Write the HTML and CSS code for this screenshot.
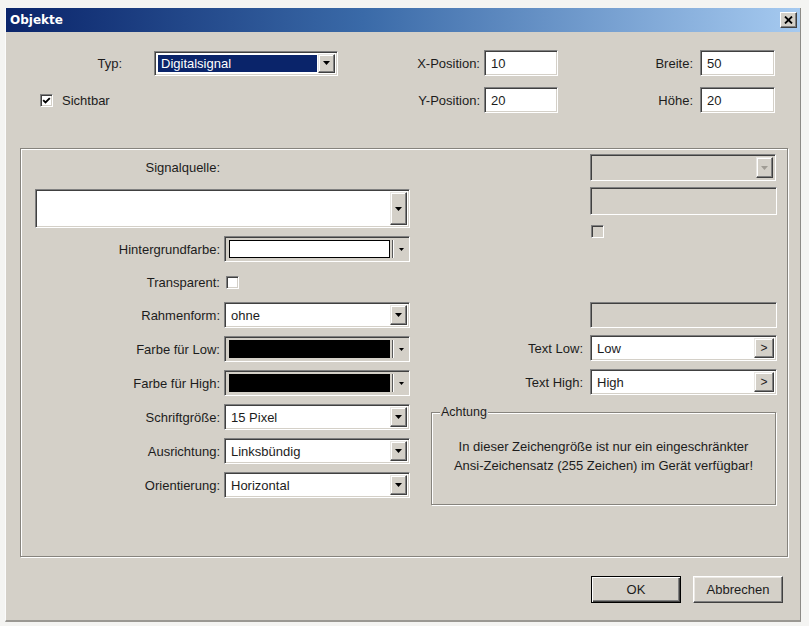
FILE: index.html
```html
<!DOCTYPE html>
<html lang="de">
<head>
<meta charset="utf-8">
<title>Objekte</title>
<link rel="stylesheet" href="styles.css">
</head>
<body>
<div class="dialog">
  <div class="titlebar">
    <span class="title">Objekte</span>
    <span class="close"><svg width="9" height="8" viewBox="0 0 9 8"><path d="M1 0.5L8 7.5M8 0.5L1 7.5" stroke="#000" stroke-width="1.8"/></svg></span>
  </div>

  <div class="top">
    <span class="lbl">Typ:</span>
    <div class="sunken combo typ">
      <div class="sel">Digitalsignal</div>
      <span class="raised ddbtn"><svg width="7" height="4" viewBox="0 0 7 4"><path d="M0 0h7L3.5 4z" fill="#000"/></svg></span>
    </div>
    <span class="lbl pr4">X-Position:</span>
    <div class="sunken field">10</div>
    <span class="lbl pr7">Breite:</span>
    <div class="sunken field">50</div>

    <label class="check-row">
      <span class="sunken cb"><svg width="9" height="9" viewBox="0 0 9 9"><polyline points="1.2,4.2 3.5,6.5 7.8,2.2" fill="none" stroke="#000" stroke-width="1.9"/></svg></span>
      Sichtbar
    </label>
    <span class="lbl pr4">Y-Position:</span>
    <div class="sunken field">20</div>
    <span class="lbl pr7">Höhe:</span>
    <div class="sunken field">20</div>
  </div>

  <div class="panel">
    <div class="col-left">
      <div class="src-label"><span class="lbl">Signalquelle:</span></div>
      <div class="sunken combo big">
        <div class="val"></div>
        <span class="raised ddbtn"><svg width="7" height="4" viewBox="0 0 7 4"><path d="M0 0h7L3.5 4z" fill="#000"/></svg></span>
      </div>

      <div class="row r-first">
        <span class="lbl">Hintergrundfarbe:</span>
        <div class="sunken colorcombo">
          <span class="swatch white"></span>
          <span class="sep"></span>
          <span class="cbtn"><svg width="5" height="3" viewBox="0 0 5 3"><path d="M0 0h5L2.5 3z" fill="#000"/></svg></span>
        </div>
      </div>

      <div class="row r-check">
        <span class="lbl">Transparent:</span>
        <span class="sunken cb"></span>
      </div>

      <div class="row r-tight">
        <span class="lbl">Rahmenform:</span>
        <div class="sunken combo">
          <div class="val">ohne</div>
          <span class="raised ddbtn"><svg width="7" height="4" viewBox="0 0 7 4"><path d="M0 0h7L3.5 4z" fill="#000"/></svg></span>
        </div>
      </div>

      <div class="row">
        <span class="lbl">Farbe für Low:</span>
        <div class="sunken colorcombo">
          <span class="swatch black"></span>
          <span class="sep"></span>
          <span class="cbtn"><svg width="5" height="3" viewBox="0 0 5 3"><path d="M0 0h5L2.5 3z" fill="#000"/></svg></span>
        </div>
      </div>

      <div class="row">
        <span class="lbl">Farbe für High:</span>
        <div class="sunken colorcombo">
          <span class="swatch black"></span>
          <span class="sep"></span>
          <span class="cbtn"><svg width="5" height="3" viewBox="0 0 5 3"><path d="M0 0h5L2.5 3z" fill="#000"/></svg></span>
        </div>
      </div>

      <div class="row">
        <span class="lbl">Schriftgröße:</span>
        <div class="sunken combo">
          <div class="val">15 Pixel</div>
          <span class="raised ddbtn"><svg width="7" height="4" viewBox="0 0 7 4"><path d="M0 0h7L3.5 4z" fill="#000"/></svg></span>
        </div>
      </div>

      <div class="row">
        <span class="lbl">Ausrichtung:</span>
        <div class="sunken combo">
          <div class="val">Linksbündig</div>
          <span class="raised ddbtn"><svg width="7" height="4" viewBox="0 0 7 4"><path d="M0 0h7L3.5 4z" fill="#000"/></svg></span>
        </div>
      </div>

      <div class="row">
        <span class="lbl">Orientierung:</span>
        <div class="sunken combo">
          <div class="val">Horizontal</div>
          <span class="raised ddbtn"><svg width="7" height="4" viewBox="0 0 7 4"><path d="M0 0h7L3.5 4z" fill="#000"/></svg></span>
        </div>
      </div>
    </div>

    <div class="col-right">
      <div class="rrow">
        <span></span>
        <div class="sunken combo disabled dcombo">
          <div class="val"></div>
          <span class="raised ddbtn"><svg width="7" height="4" viewBox="0 0 7 4"><path d="M0 0h7L3.5 4z" fill="#a09c94"/></svg></span>
        </div>
      </div>
      <div class="rrow r-dtext">
        <span></span>
        <div class="sunken field disabled tall"></div>
      </div>
      <div class="rrow r-dcheck">
        <span></span>
        <span class="sunken cb disabled cb-off"></span>
      </div>
      <div class="rrow r-dtext2">
        <span></span>
        <div class="sunken field disabled"></div>
      </div>
      <div class="rrow r-low">
        <span class="lbl pr7">Text Low:</span>
        <div class="sunken field textbtn">
          <span class="tv">Low</span>
          <span class="raised gt">&gt;</span>
        </div>
      </div>
      <div class="rrow r-high">
        <span class="lbl pr7">Text High:</span>
        <div class="sunken field textbtn">
          <span class="tv">High</span>
          <span class="raised gt">&gt;</span>
        </div>
      </div>
      <div class="group">
        <span class="legend">Achtung</span>
        <p class="note">In dieser Zeichengröße ist nur ein eingeschränkter<br>Ansi-Zeichensatz (255 Zeichen) im Gerät verfügbar!</p>
      </div>
    </div>
  </div>

  <div class="buttons">
    <button class="btn default">OK</button>
    <button class="btn">Abbrechen</button>
  </div>
</div>
</body>
</html>
```

FILE: styles.css
```css
* { box-sizing: border-box; }

html, body { margin: 0; padding: 0; }

body {
  width: 809px;
  height: 626px;
  overflow: hidden;
  background: #f4f4f2;
  font-family: "Liberation Sans", Arial, sans-serif;
  font-size: 13px;
  color: #1c1c1c;
}

.dialog {
  margin: 8px 0 0 5px;
  width: 796px;
  height: 614px;
  background: #d4d0c8;
  border-left: 1px solid #fbfbfb;
  border-right: 1px solid #8c8a86;
  border-bottom: 2px solid #9a9893;
  display: flex;
  flex-direction: column;
}

/* ---------- title bar ---------- */
.titlebar {
  height: 24px;
  flex: none;
  background: linear-gradient(to right, #0a246a 0%, #3a6aa8 45%, #a6caf0 100%);
  display: flex;
  align-items: center;
  justify-content: space-between;
  padding: 0 3px 0 4px;
}

.title {
  color: #fff;
  font-family: "DejaVu Sans", Verdana, sans-serif;
  font-weight: bold;
  font-size: 12px;
}

.close {
  width: 17px;
  height: 16px;
  background: #d4d0c8;
  border: 1px solid;
  border-color: #fff #404040 #404040 #fff;
  box-shadow: inset -1px -1px 0 #808080;
  display: flex;
  align-items: center;
  justify-content: center;
}

/* ---------- 3D frames ---------- */
.sunken {
  border: 1px solid;
  border-color: #808080 #fff #fff #808080;
  box-shadow: inset 1px 1px 0 #404040, inset -1px -1px 0 #d4d0c8;
  background: #fff;
}

.raised {
  background: #d4d0c8;
  border: 1px solid;
  border-color: #e8e6e2 #404040 #404040 #e8e6e2;
  box-shadow: inset -1px -1px 0 #808080, inset 1px 1px 0 #fff;
}

.lbl {
  text-align: right;
  white-space: nowrap;
}
.pr4 { padding-right: 4px; }
.pr7 { padding-right: 7px; }

/* ---------- top area ---------- */
.top {
  display: grid;
  grid-template-columns: 116px 216px 146px 74px 142px 75px;
  grid-template-rows: 26px 26px;
  row-gap: 11px;
  align-items: center;
  padding-top: 18px;
}

.field {
  height: 26px;
  padding: 0 6px;
  display: flex;
  align-items: center;
}

.combo {
  height: 26px;
  display: flex;
  align-items: stretch;
  padding: 2px;
}
.combo .val {
  flex: 1;
  display: flex;
  align-items: center;
  padding-left: 4px;
}
.ddbtn {
  width: 17px;
  flex: none;
  display: flex;
  align-items: center;
  justify-content: center;
}

.typ {
  justify-self: end;
  width: 184px;
  height: 25px;
}
.typ .sel {
  flex: 1;
  margin: 1px;
  background: #0a246a;
  color: #fff;
  display: flex;
  align-items: center;
  padding-left: 3px;
}

.check-row {
  grid-column: 1 / 3;
  padding-left: 34px;
  display: flex;
  align-items: center;
  gap: 9px;
}

.cb {
  width: 13px;
  height: 13px;
  flex: none;
  display: flex;
  align-items: center;
  justify-content: center;
}

/* ---------- panel ---------- */
.panel {
  margin: 35px 0 0 14px;
  width: 768px;
  height: 409px;
  flex: none;
  border: 1px solid #86837d;
  box-shadow: inset 1px 1px 0 #fff, 1px 1px 0 #fff;
  display: flex;
  gap: 21px;
  padding: 5px 11px 0 14px;
}

.col-left {
  width: 375px;
  flex: none;
  display: flex;
  flex-direction: column;
}

.src-label {
  width: 189px;
  padding-right: 4px;
  text-align: right;
  line-height: 16px;
  margin-top: 6px;
}

.big {
  margin-top: 13px;
  height: 39px;
  width: 375px;
}

.row {
  display: grid;
  grid-template-columns: 189px 186px;
  height: 26px;
  align-items: center;
  margin-top: 8px;
}
.row .lbl { padding-right: 4px; }
.r-check { margin-top: 7px; }
.r-tight { margin-top: 7px; }
.row .cb { justify-self: start; margin-left: 2px; }

.colorcombo {
  height: 26px;
  display: flex;
  align-items: stretch;
  padding: 3px 2px 3px 4px;
  background: #d4d0c8;
}
.swatch {
  flex: 1;
  border: 1px solid #000;
}
.swatch.white { background: #fff; }
.swatch.black { background: #000; }
.sep {
  width: 1px;
  margin: 0 3px 0 2px;
  background: #5a5a5a;
  box-shadow: 1px 0 0 #fff;
}
.cbtn {
  width: 11px;
  display: flex;
  align-items: center;
  justify-content: center;
}

/* right column */
.col-right {
  width: 346px;
  flex: none;
  display: flex;
  flex-direction: column;
}

.rrow {
  display: grid;
  grid-template-columns: 159px 187px;
  align-items: center;
}

.disabled { background: #d4d0c8; }

.dcombo { height: 27px; width: 186px; }
.r-dtext { margin-top: 6px; }
.tall { height: 28px; }
.r-dcheck { margin-top: 10px; }
.cb-off { margin-left: 1px; }
.r-dtext2 { margin-top: 64px; }
.r-low { margin-top: 7px; }
.r-high { margin-top: 8px; }

.textbtn {
  padding: 2px 2px 2px 6px;
  justify-content: space-between;
}
.gt {
  width: 20px;
  height: 20px;
  font-size: 12px;
  display: flex;
  align-items: center;
  justify-content: center;
}

.group {
  position: relative;
  margin-top: 17px;
  width: 345px;
  height: 93px;
  border: 1px solid #86837d;
  box-shadow: inset 1px 1px 0 #fff, 1px 1px 0 #fff;
}
.legend {
  position: absolute;
  top: -9px;
  left: 8px;
  padding: 0 1px;
  background: #d4d0c8;
  font-size: 12.5px;
  line-height: 16px;
}
.note {
  margin: 24px 0 0;
  text-align: center;
  line-height: 19px;
  font-size: 13px;
}

/* ---------- buttons ---------- */
.buttons {
  margin-top: 19px;
  display: flex;
  justify-content: flex-end;
  gap: 12px;
  padding-right: 17px;
}

.btn {
  width: 90px;
  height: 27px;
  font-family: inherit;
  font-size: 13px;
  color: #1c1c1c;
  background: #d4d0c8;
  border: 1px solid;
  border-color: #fff #404040 #404040 #fff;
  box-shadow: inset -1px -1px 0 #808080, inset 1px 1px 0 #ece9e4;
  padding: 0;
}
.btn.default {
  border: 1px solid #000;
  box-shadow: inset 1px 1px 0 #fff, inset -1px -1px 0 #404040, inset -2px -2px 0 #808080;
}
```
